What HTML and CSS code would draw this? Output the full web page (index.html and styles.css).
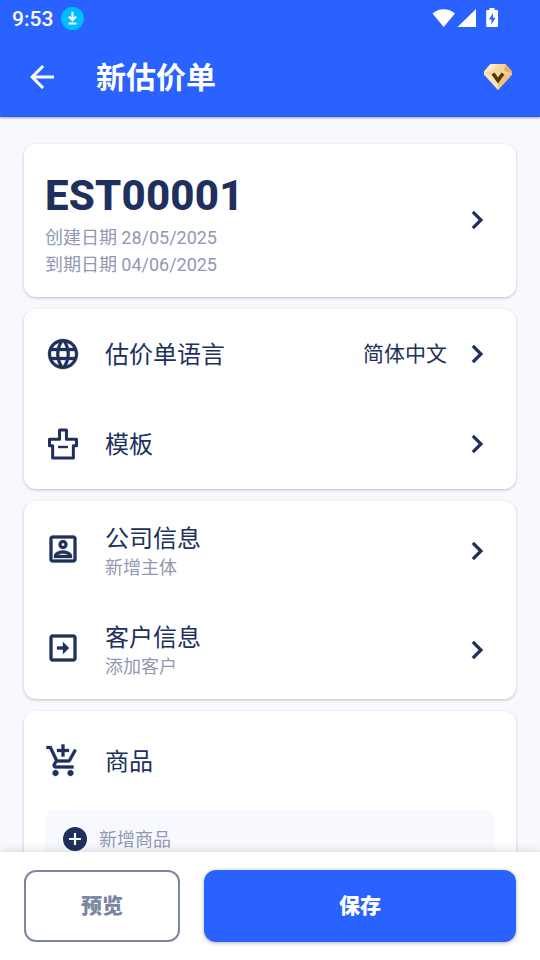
FILE: index.html
```html
<!DOCTYPE html>
<html lang="zh-CN">
<head>
<meta charset="utf-8">
<title>新估价单</title>
<link rel="stylesheet" href="styles.css">
</head>
<body>
<svg class="defs" width="0" height="0">
  <symbol id="chevron" viewBox="0 0 24 24"><path d="M10 6L8.590 7.410 13.170 12l-4.580 4.590L10 18l6-6z" stroke="#20305c" stroke-width=".3"/></symbol>
</svg>
<div class="screen">
  <header class="header">
    <div class="status">
      <span class="time">9:53</span>
      <svg class="download" viewBox="0 0 22 22"><circle cx="11" cy="11" r="11" fill="#00bdff"/><path d="M11 4.600v8M7.500 9.200l3.500 3.500 3.500-3.500M7.200 15.800h7.600" fill="none" stroke="#fff" stroke-width="2"/></svg>
      <svg class="signals" viewBox="0 0 68 22" fill="#fff"><path d="M.5 6.500C7.200.7 16.300.7 23 6.500L11.700 20z"/><path d="M44 2v18H25.500z"/><path fill-rule="evenodd" d="M57.500 1h5v2H65q1 0 1 1v15q0 1-1 1H55.200q-1 0-1-1V4q0-1 1-1h2.300zM61 6l-4 6.500h2.500v5l4-6.800H61z"/></svg>
    </div>
    <div class="toolbar">
      <svg class="icon back" viewBox="0 0 24 24"><path d="M20 11H7.830l5.590-5.590L12 4l-8 8 8 8 1.410-1.410L7.830 13H20z"/></svg>
      <h1 class="title">新估价单</h1>
      <svg class="gem" viewBox="0 0 30 28"><path fill="#f9d59c" d="M7.500 1h15L29 8.500v3L15 27 1 11.500v-3z"/><path fill="#fde7c4" d="M7.500 1H15L9 8 1 10V8.500z"/><path fill="#eab067" d="M22.500 1L29 8.500v2L21 8z"/><path fill="#f3c27c" d="M29 10.500v1L15 27v-7l7-8z"/><path fill="#fff0d3" d="M1 10l7 2 7 8v7L1 11.500z" opacity=".55"/><path d="M10 10.500l5 7 5-7" fill="none" stroke="#513807" stroke-width="3.600"/></svg>
    </div>
  </header>
  <main class="content">
    <section class="card summary">
      <div>
        <h2 class="number">EST00001</h2>
        <p class="date">创建日期 28/05/2025</p>
        <p class="date">到期日期 04/06/2025</p>
      </div>
      <svg class="icon"><use href="#chevron"/></svg>
    </section>
    <section class="card">
      <div class="row">
        <svg class="icon" viewBox="0 0 24 24"><path stroke="#20305c" stroke-width=".2" d="M11.990 2C6.470 2 2 6.480 2 12s4.470 10 9.990 10C17.520 22 22 17.520 22 12S17.520 2 11.990 2zm6.930 6h-2.950c-.32-1.250-.78-2.450-1.380-3.560 1.840.63 3.370 1.910 4.330 3.560zM12 4.040c.83 1.200 1.480 2.530 1.910 3.960h-3.820c.43-1.430 1.080-2.760 1.910-3.960zM4.260 14C4.100 13.360 4 12.690 4 12s.1-1.360.26-2h3.380c-.08.66-.14 1.320-.14 2s.06 1.340.14 2H4.260zm.82 2h2.950c.32 1.250.78 2.450 1.380 3.560-1.840-.63-3.370-1.900-4.330-3.560zm2.950-8H5.080c.96-1.660 2.490-2.930 4.330-3.560C8.810 5.550 8.350 6.750 8.030 8zM12 19.960c-.83-1.200-1.480-2.530-1.910-3.960h3.820c-.43 1.430-1.080 2.760-1.910 3.960zM14.340 14H9.660c-.09-.66-.16-1.320-.16-2s.07-1.350.16-2h4.680c.09.65.16 1.320.16 2s-.07 1.340-.16 2zm.25 5.560c.6-1.110 1.060-2.310 1.380-3.560h2.950c-.96 1.650-2.490 2.930-4.330 3.560zM16.360 14c.08-.66.14-1.320.14-2s-.06-1.340-.14-2h3.380c.16.64.26 1.310.26 2s-.1 1.360-.26 2h-3.380z"/></svg>
        <span class="label lift">估价单语言</span>
        <span class="value">简体中文</span>
        <svg class="icon"><use href="#chevron"/></svg>
      </div>
      <div class="row">
        <svg class="icon" viewBox="0 0 24 24"><path fill="none" stroke="#20305c" stroke-width="2" stroke-linejoin="round" d="M9.700 2.700h4.600v6.200H21v4.200h-2.100v8.300H5.100v-8.300H3V8.900h6.700z"/><path d="M8.700 13.200h6.600v1.600H8.700z"/></svg>
        <span class="label lift">模板</span>
        <svg class="icon"><use href="#chevron"/></svg>
      </div>
    </section>
    <section class="card">
      <div class="row tall">
        <svg class="icon" viewBox="0 0 24 24"><path stroke="#20305c" stroke-width=".2" d="M19 3H5c-1.110 0-2 .9-2 2v14c0 1.100.89 2 2 2h14c1.100 0 2-.9 2-2V5c0-1.100-.9-2-2-2zm0 16H5V5h14v14zM12 12c1.650 0 3-1.350 3-3s-1.350-3-3-3-3 1.350-3 3 1.350 3 3 3zm0-4c.55 0 1 .45 1 1s-.45 1-1 1-1-.45-1-1 .45-1 1-1zm6 8.580c0-2.500-3.970-3.580-6-3.580s-6 1.080-6 3.580V18h12v-1.420zM8.480 16c.74-.51 2.230-1 3.520-1s2.780.49 3.520 1H8.480z"/></svg>
        <div class="label"><p class="name">公司信息</p><p class="hint">新增主体</p></div>
        <svg class="icon go"><use href="#chevron"/></svg>
      </div>
      <div class="row tall">
        <svg class="icon" viewBox="0 0 24 24"><path stroke="#20305c" stroke-width=".2" d="M19 3H5c-1.110 0-2 .9-2 2v14c0 1.100.89 2 2 2h14c1.100 0 2-.9 2-2V5c0-1.100-.9-2-2-2zm0 16H5V5h14v14zM12 8l4 4-4 4v-3H8v-2h4z"/></svg>
        <div class="label"><p class="name">客户信息</p><p class="hint">添加客户</p></div>
        <svg class="icon go"><use href="#chevron"/></svg>
      </div>
    </section>
    <section class="card goods">
      <div class="row goods-head">
        <svg class="icon" viewBox="0 0 24 24"><path stroke="#20305c" stroke-width=".2" d="M11 9h2V6h3V4h-3V1h-2v3H8v2h3v3zm-4 9c-1.100 0-1.990.9-1.990 2S5.900 22 7 22s2-.9 2-2-.9-2-2-2zm10 0c-1.100 0-1.990.9-1.990 2s.89 2 1.990 2 2-.9 2-2-.9-2-2-2zm-8.900-5h7.450c.75 0 1.410-.41 1.750-1.030l3.860-7.010L19.420 4l-3.870 7H8.530L4.270 2H1v2h2l3.600 7.590-1.350 2.440C4.520 15.370 5.480 17 7 17h12v-2H7l1.100-2z"/></svg>
        <span class="label">商品</span>
      </div>
      <div class="add">
        <svg class="plus" viewBox="0 0 24 24"><circle cx="12" cy="12" r="12"/><path d="M12 6v12M6 12h12" stroke="#fff" stroke-width="2.200"/></svg>
        <span class="add-text">新增商品</span>
      </div>
    </section>
  </main>
  <footer class="footer">
    <button class="btn preview">预览</button>
    <button class="btn save">保存</button>
  </footer>
</div>
</body>
</html>
```
FILE: styles.css
```css
* { box-sizing: border-box; margin: 0; padding: 0; }
body {
  font-family: Roboto, "Noto Sans CJK SC", sans-serif;
  color: #20305c;
  background: #f8f9fe;
}
svg { display: block; flex: none; }
.defs { position: absolute; }
.screen { display: flex; flex-direction: column; height: 960px; overflow: hidden; }
.header {
  flex: none;
  height: 117px;
  background: #2962ff;
  color: #fff;
  box-shadow: 0 1px 2px rgba(0, 0, 0, .35);
}
.status { display: flex; align-items: center; height: 36px; padding: 0 40px 0 12px; }
.time { font-size: 21px; font-weight: 500; line-height: 36px; padding-top: 2px; }
.download { width: 23px; height: 23px; margin-left: 8px; }
.signals { width: 68px; height: 22px; margin-left: auto; }
.toolbar { display: flex; align-items: center; height: 81px; padding: 0 27px 0 24px; }
.icon { width: 36px; height: 36px; fill: #20305c; }
.back { fill: #fff; }
.title { flex: 1; margin-left: 36px; padding-top: 2px; font-size: 30px; font-weight: 700; line-height: 44px; }
.gem { width: 30px; height: 28px; }
.content {
  flex: 1;
  min-height: 0;
  overflow: hidden;
  display: flex;
  flex-direction: column;
  gap: 12px;
  padding: 27px 24px 0;
}
.card {
  flex: none;
  background: #fff;
  border-radius: 12px;
  box-shadow: 0 1px 3px rgba(0, 0, 0, .24);
}
.summary {
  display: flex;
  align-items: center;
  justify-content: space-between;
  height: 153px;
  padding: 0 21px 1px;
}
.number { padding-top: 9px; font-size: 42px; font-weight: 800; line-height: 50px; letter-spacing: .2px; margin-bottom: 3px; }
.date { font-size: 18px; line-height: 27.5px; letter-spacing: -.02px; color: #8f99b3; }
.row { display: flex; align-items: center; height: 90px; padding: 0 21px; }
.label { flex: 1; margin-left: 24px; font-size: 24px; }
.lift { padding-bottom: 4px; }
.value { font-size: 21px; margin-right: 12px; padding-bottom: 4px; }
.tall { height: 99px; padding-bottom: 3px; }
.tall .label { padding-top: 6px; }
.go { margin-top: 3px; }
.name { font-size: 24px; line-height: 30px; }
.hint { font-size: 18px; line-height: 27px; color: #8f99b3; }
.goods { height: 240px; }
.goods-head { height: 99px; }
.goods-head .label { padding-bottom: 2px; }
.add {
  display: flex;
  align-items: center;
  gap: 12px;
  height: 57px;
  margin: 0 21px;
  padding: 0 18px;
  border-radius: 9px;
  background: #f8f9fe;
  font-size: 18px;
  color: #8f99b3;
}
.add-text { padding-bottom: 2px; }
.plus { width: 24px; height: 24px; fill: #20305c; }
.footer {
  position: relative;
  flex: none;
  display: flex;
  gap: 24px;
  height: 108px;
  padding: 18px 24px;
  background: #fff;
  box-shadow: 0 0 10px rgba(0, 0, 0, .16);
}
.btn { height: 72px; padding-bottom: 4px; border: 0; border-radius: 12px; font: 900 21px Roboto, "Noto Sans CJK SC", sans-serif; }
.preview { width: 156px; border: 2px solid #7b86a2; background: #fff; color: #7b86a2; }
.save { flex: 1; background: #2962ff; color: #fff; box-shadow: 0 1px 4px rgba(0, 0, 0, .3); }
```
